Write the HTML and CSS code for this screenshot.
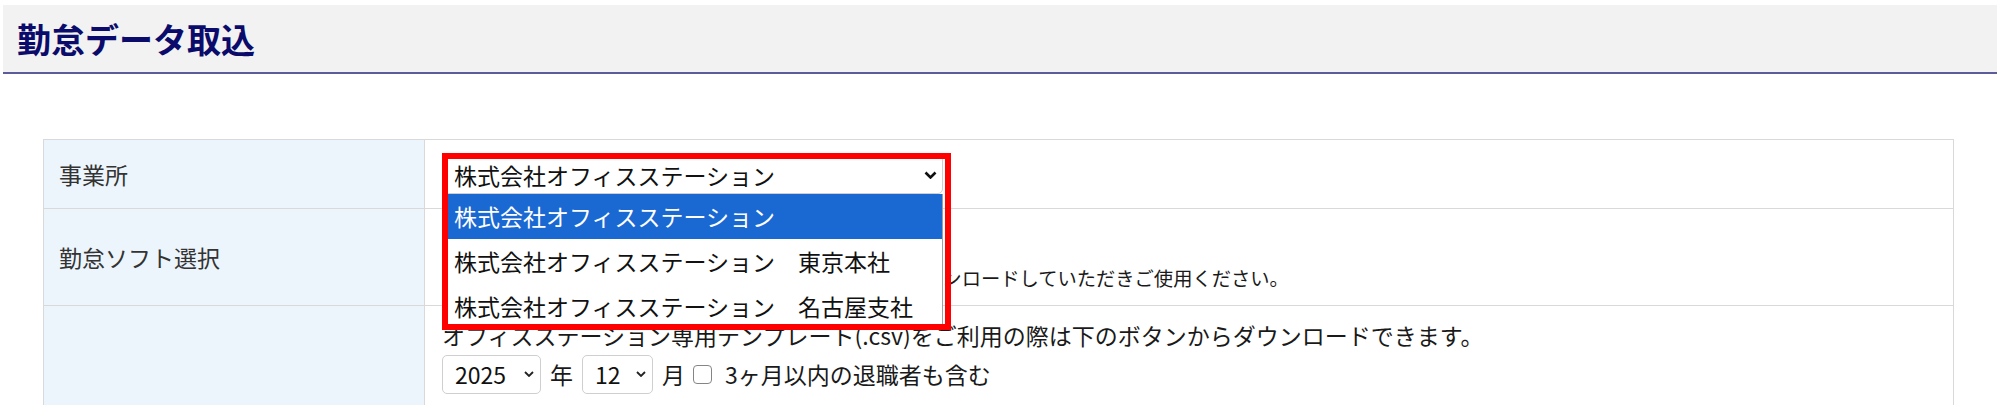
FILE: index.html
```html
<!DOCTYPE html>
<html lang="ja">
<head>
<meta charset="UTF-8" />
<meta name="viewport" content="width=device-width, initial-scale=1" />
<title>勤怠データ取込</title>
<link rel="stylesheet" href="styles.css">
</head>
<body>

  <header class="page-head">
    <h1 class="page-title">勤怠データ取込</h1>
  </header>

  <div class="content">
    <table class="form-table">
      <colgroup>
        <col class="col-label">
        <col>
      </colgroup>
      <tr class="row-office">
        <th>事業所</th>
        <td>
          <div class="office-field">
            <span class="select-wrap">
              <select class="select select-office" aria-label="事業所">
                <option>株式会社オフィスステーション</option>
                <option>株式会社オフィスステーション　東京本社</option>
                <option>株式会社オフィスステーション　名古屋支社</option>
              </select>
              <svg class="chevron chevron-bold" width="13" height="8" viewBox="0 0 13 8" aria-hidden="true">
                <path d="M1.5 1.5 L6.5 6.5 L11.5 1.5" />
              </svg>
            </span>
            <ul class="dropdown" role="listbox">
              <li class="is-active" role="option">株式会社オフィスステーション</li>
              <li role="option">株式会社オフィスステーション　東京本社</li>
              <li role="option">株式会社オフィスステーション　名古屋支社</li>
            </ul>
            <div class="mark"></div>
          </div>
        </td>
      </tr>
      <tr class="row-soft">
        <th>勤怠ソフト選択</th>
        <td>
          <span class="select-wrap">
            <select class="select select-soft" aria-label="勤怠ソフト選択">
              <option value=""></option>
            </select>
            <svg class="chevron" width="10" height="6" viewBox="0 0 10 6" aria-hidden="true">
              <path d="M1 1 L5 5 L9 1" />
            </svg>
          </span>
          <div class="soft-note">※一覧にない場合は、下記より専用のテンプレートをダウンロードしていただきご使用ください。</div>
        </td>
      </tr>
      <tr class="row-period">
        <th></th>
        <td>
          <div class="tmpl-note">オフィスステーション専用テンプレート(.csv)をご利用の際は下のボタンからダウンロードできます。</div>
          <div class="period">
            <span class="select-wrap">
              <select class="select select-year" aria-label="年">
                <option>2025</option>
              </select>
              <svg class="chevron" width="10" height="6" viewBox="0 0 10 6" aria-hidden="true">
                <path d="M1 1 L5 5 L9 1" />
              </svg>
            </span>
            <span>年</span>
            <span class="select-wrap">
              <select class="select select-month" aria-label="月">
                <option>12</option>
              </select>
              <svg class="chevron" width="10" height="6" viewBox="0 0 10 6" aria-hidden="true">
                <path d="M1 1 L5 5 L9 1" />
              </svg>
            </span>
            <span>月</span>
            <label class="check">
              <input type="checkbox" class="check-box">
              <span>3ヶ月以内の退職者も含む</span>
            </label>
          </div>
        </td>
      </tr>
    </table>
  </div>

</body>
</html>
```

FILE: styles.css
```css
body {
  margin: 0;
  padding: 5px 3px;
  font-family: "Noto Sans CJK JP", "Noto Sans", sans-serif;
  color: #1a1a1a;
  background: #fff;
}
.page-head {
  display: flex;
  align-items: center;
  height: 67px;
  padding-left: 14px;
  background: #f2f2f2;
  border-bottom: 2px solid #5c5c9c;
}
.page-title {
  margin: 0;
  font-size: 34px;
  font-weight: 700;
  line-height: 1;
  color: #0b0b6b;
}
.content {
  padding: 65px 43px 0 40px;
}
.form-table {
  width: 100%;
  border-collapse: collapse;
  table-layout: fixed;
  font-size: 23px;
}
.col-label {
  width: 381px;
}
.form-table th,
.form-table td {
  border: 1px solid #d9d9d9;
}
.form-table th {
  padding: 0 15px;
  background: #edf5fc;
  color: #333;
  font-weight: 400;
  text-align: left;
  vertical-align: middle;
}
.form-table td {
  padding: 13px 17px;
  vertical-align: top;
}
.row-office td {
  padding: 14px 17px;
}
.row-soft td {
  padding-bottom: 12px;
}
.row-period td {
  height: 200px;
}

/* selects */
.select-wrap {
  position: relative;
  display: inline-block;
  vertical-align: middle;
}
.select {
  appearance: none;
  -webkit-appearance: none;
  display: block;
  height: 39px;
  margin: 0;
  padding: 0 28px 0 12px;
  font-family: inherit;
  font-size: 23px;
  color: #111;
  background: #fff;
  border: 1px solid #cfcfcf;
  border-radius: 5px;
}
.select-office {
  width: 501px;
  padding-left: 11px;
}
.select-soft {
  width: 340px;
}
.select-year {
  width: 99px;
}
.select-month {
  width: 71px;
}
.chevron {
  position: absolute;
  right: 7px;
  top: 50%;
  margin-top: -3px;
  fill: none;
  stroke: #222;
  stroke-width: 1.8;
  pointer-events: none;
}
.chevron-bold {
  right: 6px;
  margin-top: -4px;
  stroke: #111;
  stroke-width: 2.6;
}

/* open list of the office select */
.office-field {
  position: relative;
  width: 501px;
}
.dropdown {
  position: absolute;
  top: 100%;
  left: 0;
  z-index: 2;
  width: 501px;
  margin: 0;
  padding: 0;
  list-style: none;
  background: #fff;
  border: 1px solid #a0a0a0;
  border-top: none;
  box-sizing: border-box;
}
.dropdown li {
  height: 44.67px;
  padding-left: 11px;
  line-height: 44.67px;
  color: #111;
  white-space: nowrap;
}
.dropdown li.is-active {
  background: #1a68d2;
  color: #fff;
}
.mark {
  position: absolute;
  left: 0;
  top: -1px;
  z-index: 3;
  width: 509px;
  height: 177px;
  border: 6px solid #ff0000;
  box-sizing: border-box;
  pointer-events: none;
}

.soft-note {
  font-size: 19.3px;
  line-height: 30px;
  white-space: nowrap;
}
.tmpl-note {
  line-height: 32px;
  white-space: nowrap;
}
.period {
  display: flex;
  align-items: center;
  gap: 9px;
  margin-top: 4px;
}
.check {
  display: flex;
  align-items: center;
  gap: 13px;
}
.check-box {
  appearance: none;
  -webkit-appearance: none;
  width: 19px;
  height: 19px;
  margin: 0 0 0 -1px;
  border: 1px solid #858585;
  border-radius: 4px;
  background: #fff;
}
```
